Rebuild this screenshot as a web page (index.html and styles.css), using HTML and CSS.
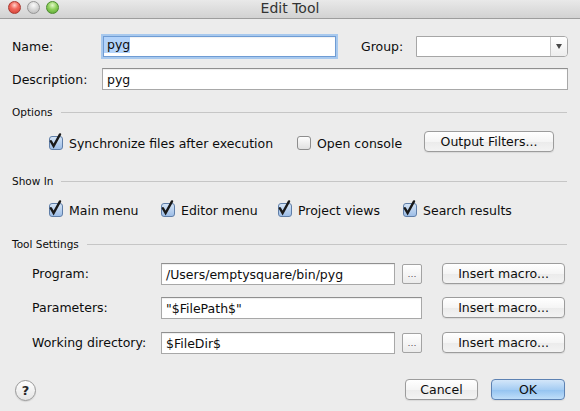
FILE: index.html
```html
<!DOCTYPE html>
<html>
<head>
<meta charset="utf-8">
<title>Edit Tool</title>
<link rel="stylesheet" href="styles.css">
</head>
<body>
<div class="titlebar">
  <div class="lights">
    <span class="light red"></span>
    <span class="light gray"></span>
    <span class="light green"></span>
  </div>
  <div class="title">Edit Tool</div>
  <div></div>
</div>
<div class="content">
  <div class="row row-name">
    <label class="field-label">Name:</label>
    <div class="input input-name"><span class="sel">pyg</span></div>
    <label class="group-label">Group:</label>
    <div class="combo">
      <div class="combo-field"></div>
      <div class="combo-arrow"><span class="tri"></span></div>
    </div>
  </div>
  <div class="row row-desc">
    <label class="field-label">Description:</label>
    <div class="input input-grow">pyg</div>
  </div>

  <div class="section"><span>Options</span><span class="rule"></span></div>
  <div class="row row-options">
    <label class="check w-sync"><span class="cb on"><svg width="16" height="16" viewBox="0 0 16 16"><polyline points="1.8,5.2 4.6,10 11,-1.6" fill="none" stroke="#1a1a1a" stroke-width="2.4" stroke-linejoin="miter" stroke-linecap="round"/></svg></span>Synchronize files after execution</label>
    <label class="check w-console"><span class="cb"></span>Open console</label>
    <button class="btn btn-filters">Output Filters...</button>
  </div>

  <div class="section"><span>Show In</span><span class="rule"></span></div>
  <div class="row row-showin">
    <label class="check w-main"><span class="cb on"><svg width="16" height="16" viewBox="0 0 16 16"><polyline points="1.8,5.2 4.6,10 11,-1.6" fill="none" stroke="#1a1a1a" stroke-width="2.4" stroke-linejoin="miter" stroke-linecap="round"/></svg></span>Main menu</label>
    <label class="check w-editor"><span class="cb on"><svg width="16" height="16" viewBox="0 0 16 16"><polyline points="1.8,5.2 4.6,10 11,-1.6" fill="none" stroke="#1a1a1a" stroke-width="2.4" stroke-linejoin="miter" stroke-linecap="round"/></svg></span>Editor menu</label>
    <label class="check w-project"><span class="cb on"><svg width="16" height="16" viewBox="0 0 16 16"><polyline points="1.8,5.2 4.6,10 11,-1.6" fill="none" stroke="#1a1a1a" stroke-width="2.4" stroke-linejoin="miter" stroke-linecap="round"/></svg></span>Project views</label>
    <label class="check"><span class="cb on"><svg width="16" height="16" viewBox="0 0 16 16"><polyline points="1.8,5.2 4.6,10 11,-1.6" fill="none" stroke="#1a1a1a" stroke-width="2.4" stroke-linejoin="miter" stroke-linecap="round"/></svg></span>Search results</label>
  </div>

  <div class="section"><span>Tool Settings</span><span class="rule"></span></div>
  <div class="settings">
    <label class="s-label">Program:</label>
    <div class="input s-input">/Users/emptysquare/bin/pyg</div>
    <button class="dots">&hellip;</button>
    <button class="btn btn-macro">Insert macro...</button>

    <label class="s-label">Parameters:</label>
    <div class="input s-input-wide">"$FilePath$"</div>
    <button class="btn btn-macro">Insert macro...</button>

    <label class="s-label">Working directory:</label>
    <div class="input s-input">$FileDir$</div>
    <button class="dots">&hellip;</button>
    <button class="btn btn-macro">Insert macro...</button>
  </div>

  <div class="footer">
    <button class="help">?</button>
    <div class="spacer"></div>
    <button class="btn btn-cancel">Cancel</button>
    <button class="btn btn-ok">OK</button>
  </div>
</div>
</body>
</html>
```

FILE: styles.css
```css
* { box-sizing: border-box; }
html, body { margin: 0; padding: 0; }
body {
  width: 580px;
  height: 411px;
  overflow: hidden;
  background: #ececec;
  font-family: "DejaVu Sans", "Liberation Sans", sans-serif;
  font-size: 12.5px;
  color: #0d0d0d;
}

/* title bar */
.titlebar {
  height: 19px;
  display: grid;
  grid-template-columns: 1fr auto 1fr;
  background: linear-gradient(#e9e9e9, #d2d2d2);
  border-bottom: 1px solid #9d9d9d;
}
.lights {
  display: flex;
  gap: 6px;
  padding-left: 8px;
  padding-top: 1px;
}
.light {
  width: 13px;
  height: 13px;
  border-radius: 50%;
}
.red {
  background: radial-gradient(circle at 50% 30%, #ffd2cb 0%, #f26a5e 40%, #cf3a2f 100%);
  border: 1px solid #a93a31;
}
.gray {
  background: radial-gradient(circle at 50% 30%, #fafafa 0%, #d6d6d6 50%, #b5b5b5 100%);
  border: 1px solid #969696;
}
.green {
  background: radial-gradient(circle at 50% 30%, #e4f8c9 0%, #8fd15c 45%, #53a02d 100%);
  border: 1px solid #4c8c2e;
}
.title {
  font-size: 14px;
  line-height: 16px;
  color: #333;
}

/* content */
.content {
  padding: 0 12px;
}
.row {
  display: flex;
  align-items: center;
}
.field-label {
  width: 90px;
  flex: none;
}
.input {
  height: 22px;
  background: #fff;
  border: 1px solid #a8a8a8;
  border-top-color: #8f8f8f;
  box-shadow: inset 0 1px 1px rgba(0, 0, 0, 0.07);
  padding: 0 4px;
  display: flex;
  align-items: center;
  white-space: nowrap;
  overflow: hidden;
}
.row-name {
  margin-top: 17px;
  height: 21px;
}
.input-name {
  width: 233px;
  height: 21px;
  margin-left: 1px;
  padding: 0;
  align-items: flex-start;
  border-color: #6f9cd4;
  box-shadow: 0 0 0 2px #a8c9ee, inset 0 1px 1px rgba(0, 0, 0, 0.06);
}
.sel {
  display: block;
  height: 16px;
  line-height: 16px;
  padding-left: 3px;
  background: #b3d3fa;
}
.group-label {
  margin-left: 25px;
}
.combo {
  margin-left: auto;
  width: 152px;
  height: 21px;
  display: flex;
  background: #fff;
  border: 1px solid #a6a6a6;
  border-radius: 0 4px 4px 0;
}
.combo-field { flex: 1; }
.combo-arrow {
  width: 17px;
  border-left: 1px solid #c6c6c6;
  border-radius: 0 3px 3px 0;
  background: linear-gradient(#ffffff, #ededed);
  display: flex;
  align-items: center;
  justify-content: center;
}
.tri {
  width: 0;
  height: 0;
  border-left: 3.5px solid transparent;
  border-right: 3.5px solid transparent;
  border-top: 5px solid #484848;
}
.row-desc {
  margin-top: 11px;
}
.input-grow {
  flex: 1;
}

/* section headers */
.section {
  display: flex;
  align-items: center;
  height: 14px;
  font-size: 10.5px;
  margin-top: 15px;
}
.rule {
  flex: 1;
  height: 1px;
  background: #c6c6c6;
  margin-left: 8px;
  margin-right: 1px;
}

/* checkboxes */
.check {
  display: flex;
  align-items: center;
  flex: none;
  white-space: nowrap;
}
.cb {
  position: relative;
  width: 14px;
  height: 14px;
  flex: none;
  margin-right: 6px;
  border: 1px solid #8d8d8d;
  border-radius: 3px;
  background: linear-gradient(#fdfdfd, #e0e0e0);
}
.cb.on {
  border-color: #5f7ea8;
  background: linear-gradient(#d4e4f6, #9dbde6);
}
.cb svg {
  position: absolute;
  left: -1px;
  top: -1px;
  overflow: visible;
}
.row-options {
  margin-top: 11px;
  height: 26px;
  padding-left: 37px;
}
.w-sync { width: 248px; }
.w-console { width: 127px; }
.row-options + .section { margin-top: 18px; }
.row-showin {
  margin-top: 12px;
  height: 20px;
  padding-left: 37px;
}
.w-main { width: 112px; }
.w-editor { width: 117px; }
.w-project { width: 125px; }
.row-showin + .section { margin-top: 17px; }

/* buttons */
button {
  font: inherit;
  color: #0d0d0d;
  padding: 0;
  margin: 0;
  cursor: default;
}
.btn {
  height: 21px;
  border: 1px solid #9c9c9c;
  border-radius: 4px;
  background: linear-gradient(#ffffff, #f5f5f5 50%, #ebebeb 51%, #f3f3f3);
  box-shadow: 0 1px 1px rgba(0, 0, 0, 0.08);
  white-space: nowrap;
}
.btn-filters {
  width: 130px;
  align-self: flex-start;
  margin-top: 1px;
}

/* tool settings */
.settings {
  margin-top: 12px;
  padding-left: 20px;
  display: grid;
  grid-template-columns: 129px 234px 7px 20px 20px 123px;
  grid-template-rows: 22px 23px 22px;
  row-gap: 12px;
  align-items: start;
}
.s-label {
  grid-column: 1;
  line-height: 22px;
  white-space: nowrap;
}
.s-input { grid-column: 2; }
.s-input-wide { grid-column: 2 / 5; }
.dots {
  grid-column: 4;
  width: 20px;
  height: 20px;
  margin-top: 1px;
  border: 1px solid #a3a3a3;
  border-radius: 2px;
  background: linear-gradient(#ffffff, #ebebeb);
  font-size: 9px;
  line-height: 14px;
  color: #555;
  display: flex;
  align-items: center;
  justify-content: center;
}
.btn-macro {
  grid-column: 6;
  width: 123px;
}

/* footer */
.footer {
  margin-top: 25px;
  display: flex;
  align-items: flex-start;
  padding: 0 3px;
  gap: 13px;
}
.spacer { flex: 1; }
.help {
  width: 21px;
  height: 21px;
  margin-top: 1px;
  border-radius: 50%;
  border: 1px solid #989898;
  background: linear-gradient(#ffffff, #e4e4e4);
  box-shadow: 0 1px 1px rgba(0, 0, 0, 0.1);
  font-size: 13px;
  font-weight: bold;
  color: #262626;
  display: flex;
  align-items: center;
  justify-content: center;
}
.btn-cancel { width: 73px; }
.btn-ok {
  width: 74px;
  border-color: #5d82b3;
  background: linear-gradient(#d3e6f9, #a6cdf3 50%, #92c2f0 51%, #bfdef9);
}
```
